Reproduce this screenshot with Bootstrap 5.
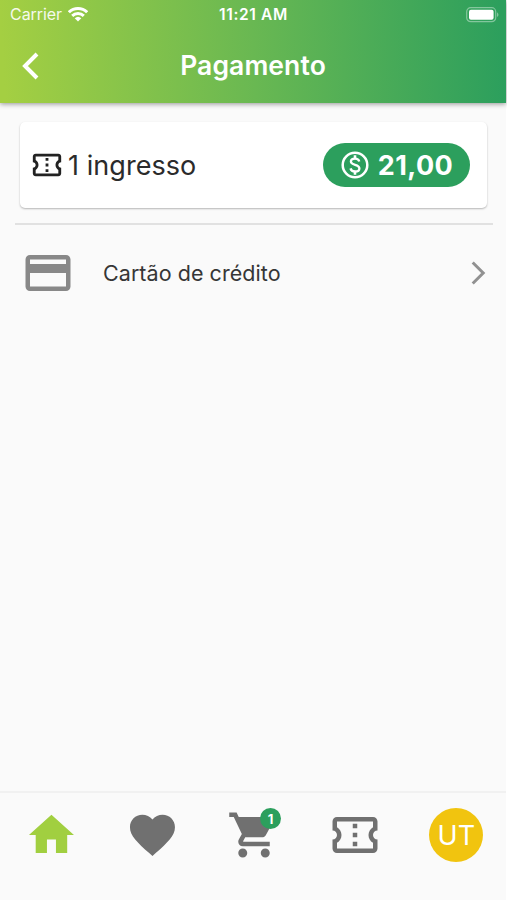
<!DOCTYPE html>
<html lang="pt-BR">
<head>
<meta charset="utf-8">
<meta name="viewport" content="width=device-width, initial-scale=1">
<title>Pagamento</title>
<link href="https://cdn.jsdelivr.net/npm/bootstrap@5.3.0/dist/css/bootstrap.min.css" rel="stylesheet">
<style>
body{font-family:Inter,"Liberation Sans",sans-serif;background:#fff;color:#2b2b2b;height:900px;overflow:hidden}
svg{display:block;flex:none}
.screen{width:506px;height:900px;background:#fafafa}
.app-header{height:103px;background:linear-gradient(87deg,#a4cf42 1%,#69b852 50%,#2c9f5d 99%);box-shadow:0 1px 5px rgba(0,0,0,.42);color:#fff}
.status-bar{height:29px;padding:0 7px 0 10px;line-height:29px}
.carrier{font-size:16px;letter-spacing:-.05px;opacity:.9}
.wifi{margin-left:6px}
.clock{font-size:15.5px;font-weight:600;letter-spacing:.65px;padding-right:2px}
.title-bar{height:74px;padding:0 22px}
.title-text{font-size:26.5px;font-weight:600;letter-spacing:.1px}
.side{width:100px}
.summary{margin:19px 19px 0 20px;height:86px;border-radius:5px;background:#fff;box-shadow:0 1px 2px rgba(0,0,0,.28);padding:0 17px 0 10px}
.tickets{font-size:27px;letter-spacing:.05px}
.tickets span{padding-top:2px}
.price{width:147px;height:44px;background:#2c9f5d;color:#fff;font-size:27px;font-weight:700}
.price-value{letter-spacing:.4px;padding-top:2px}
.rule{height:2px;background:#e1e1e1;margin:15px 13px 0 15px}
.method{height:96px;padding:0 20px 0 21px;color:#363636}
.method-name{font-size:21.5px;letter-spacing:.05px;margin-left:28px}
.tabs{height:109px;border-top:2px solid #f1f1f1;padding:15px 0 0;color:#707070}
.tabs>div{width:20%}
.tabs>div:nth-child(n+3){padding-left:2px}
.avatar{width:54px;height:54px;background:#f1c40f;color:#fff;font-size:27px;padding-top:2px}
.count{width:21px;height:21px;background:#2c9f5d;color:#fff;font-size:13px;font-weight:700;left:33px;top:0;padding-top:3px}
</style>
<script src="https://cdn.jsdelivr.net/npm/bootstrap@5.3.0/dist/js/bootstrap.bundle.min.js"></script>
</head>
<body>
<svg width="0" height="0" class="d-none" aria-hidden="true">
<symbol id="ticket" viewBox="0 0 24 24"><path d="M22 10V6c0-1.11-.9-2-2-2H4c-1.1 0-1.99.89-1.99 2v4c1.1 0 1.99.9 1.99 2s-.89 2-2 2v4c0 1.1.9 2 2 2h16c1.1 0 2-.9 2-2v-4c-1.1 0-2-.9-2-2s.9-2 2-2zm-2-1.46c-1.19.69-2 1.99-2 3.46s.81 2.77 2 3.46V18H4v-2.54c1.19-.69 2-1.99 2-3.46 0-1.48-.8-2.77-1.99-3.46L4 6h16v2.54zM11 15h2v2h-2zm0-4h2v2h-2zm0-4h2v2h-2z"/></symbol>
</svg>
<div class="screen d-flex flex-column">
  <header class="app-header">
    <div class="status-bar d-flex align-items-center justify-content-between">
      <div class="side d-flex align-items-center"><span class="carrier">Carrier</span>
        <svg class="wifi" width="20" height="15" viewBox="0 0 20 15"><g fill="none" stroke="#fff" stroke-width="3"><path d="M.9 5.3a13 13 0 0 1 18.2 0"/><path d="M4.2 8.9a8.3 8.3 0 0 1 11.6 0"/></g><path fill="#fff" d="M6.7 11.3a4.8 4.8 0 0 1 6.6 0L10 14.6z"/></svg>
      </div>
      <span class="clock">11:21 AM</span>
      <div class="side d-flex justify-content-end">
        <svg width="33" height="16" viewBox="0 0 33 16"><rect x=".7" y=".7" width="29" height="14" rx="4" fill="none" stroke="#fff" stroke-opacity=".4" stroke-width="1.2"/><rect x="3" y="2.7" width="24.6" height="10" rx="2" fill="#fff"/><path d="M31 5.3q3 2.4 0 4.8z" fill="#fff" opacity=".4"/></svg>
      </div>
    </div>
    <div class="title-bar d-flex align-items-center justify-content-between">
      <div class="side"><svg width="18" height="28" viewBox="0 0 18 28"><path d="M15 2 3 14l12 12" fill="none" stroke="#fff" stroke-width="4"/></svg></div>
      <span class="title-text">Pagamento</span>
      <div class="side"></div>
    </div>
  </header>
  <main class="flex-grow-1">
    <section class="summary d-flex align-items-center justify-content-between">
      <div class="tickets d-flex align-items-center"><svg width="34" height="34" fill="#222"><use href="#ticket"/></svg><span class="ms-1">1 ingresso</span></div>
      <div class="price rounded-pill d-flex align-items-center justify-content-center">
        <svg width="30" height="30" viewBox="0 0 30 30" fill="none" stroke="#fff"><circle cx="15" cy="15" r="12.3" stroke-width="2.5"/><path d="M15 5.2v3.2M15 21.6v3.2" stroke-width="2.6"/><path d="M19.3 11.5C18.7 9.5 17.2 8.6 15 8.6c-2.5 0-4.1 1.2-4.1 3 0 4.3 8.5 2.3 8.5 6.8 0 1.9-1.7 3.1-4.3 3.1-2.4 0-4.1-1.1-4.6-3.1" stroke-width="2.3"/></svg>
        <span class="price-value ms-2">21,00</span>
      </div>
    </section>
    <div class="rule"></div>
    <section class="method d-flex align-items-center">
      <svg width="54" height="54" viewBox="0 0 24 24" fill="#888"><path d="M20 4H4c-1.11 0-1.99.89-1.99 2L2 18c0 1.11.89 2 2 2h16c1.11 0 2-.89 2-2V6c0-1.11-.89-2-2-2zm0 14H4v-6h16v6zm0-10H4V6h16v2z"/></svg>
      <span class="method-name">Cartão de crédito</span>
      <svg class="ms-auto" width="15" height="24" viewBox="0 0 15 24"><path d="M1.7 1.5 12.2 12 1.7 22.5" fill="none" stroke="#919191" stroke-width="3"/></svg>
    </section>
  </main>
  <nav class="tabs d-flex">
    <div class="d-flex justify-content-center"><svg width="54" height="54" viewBox="-.2 0 24 24" fill="#a1cf40"><path d="M10 20v-6h4v6h5v-8h3L12 3 2 12h3v8z"/></svg></div>
    <div class="d-flex justify-content-center"><svg width="54" height="54" viewBox="-.2 0 24 24" fill="currentColor"><path d="M12 21.35l-1.45-1.32C5.4 15.36 2 12.28 2 8.5 2 5.42 4.42 3 7.5 3c1.74 0 3.41.81 4.5 2.09C13.09 3.81 14.76 3 16.5 3 19.58 3 22 5.42 22 8.5c0 3.78-3.4 6.86-8.55 11.54L12 21.35z"/></svg></div>
    <div class="d-flex justify-content-center"><div class="position-relative"><svg width="54" height="54" viewBox="0 0 24 24" fill="currentColor"><path d="M7 18c-1.1 0-1.99.9-1.99 2S5.9 22 7 22s2-.9 2-2-.9-2-2-2zM1 2v2h2l3.6 7.59-1.35 2.45c-.16.28-.25.61-.25.96 0 1.1.9 2 2 2h12v-2H7.42c-.14 0-.25-.11-.25-.25l.03-.12.9-1.63h7.45c.75 0 1.41-.41 1.75-1.03l3.58-6.49c.08-.14.12-.31.12-.48 0-.55-.45-1-1-1H5.21l-.94-2H1zm16 16c-1.1 0-1.99.9-1.99 2s.89 2 1.99 2 2-.9 2-2-.9-2-2-2z"/></svg><span class="count position-absolute rounded-circle d-flex align-items-center justify-content-center">1</span></div></div>
    <div class="d-flex justify-content-center"><svg width="54" height="54" fill="currentColor"><use href="#ticket"/></svg></div>
    <div class="d-flex justify-content-center"><div class="avatar rounded-circle d-flex align-items-center justify-content-center">UT</div></div>
  </nav>
</div>
</body>
</html>
